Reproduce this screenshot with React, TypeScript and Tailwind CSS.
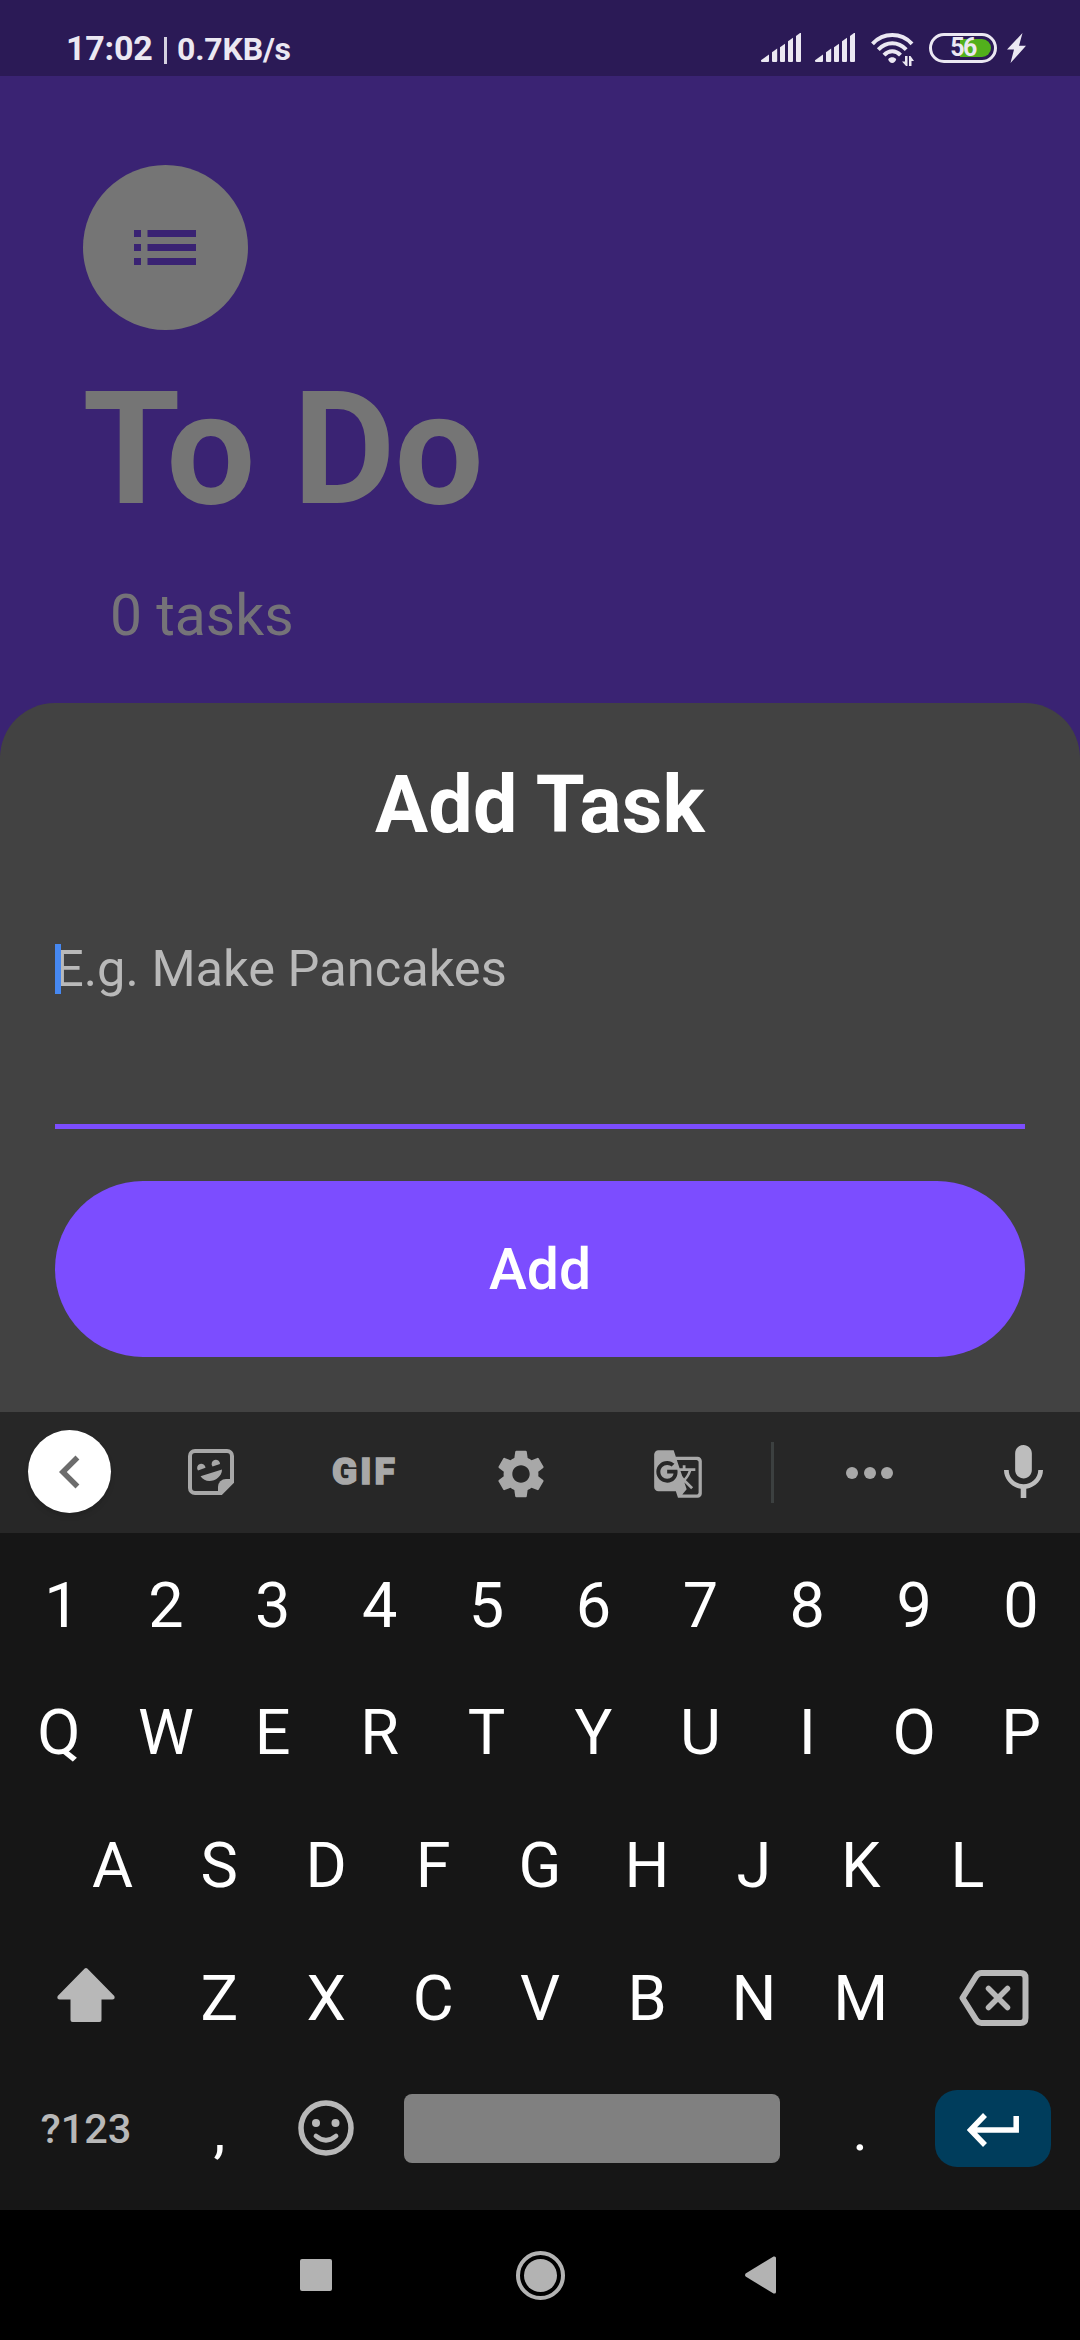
import type { ReactNode } from "react";
import { MdChevronLeft, MdGTranslate, MdSettings } from "react-icons/md";

function SignalBars() {
  return (
    <svg viewBox="0 0 40 29" className="h-[29px] w-[40px] fill-[#ebe8f2]">
      <path d="M0 28V27.2L8 21.6V28a1 1 0 0 1-1 1H1a1 1 0 0 1-1-1Z" />
      <path d="M11 19.3L16.2 15.6V28a1 1 0 0 1-1 1H12a1 1 0 0 1-1-1Z" />
      <path d="M19 14.3L24 10.8V28a1 1 0 0 1-1 1H20a1 1 0 0 1-1-1Z" />
      <path d="M27 8.3L32 4.8V28a1 1 0 0 1-1 1H28a1 1 0 0 1-1-1Z" />
      <path d="M35 3L39 0H40V28a1 1 0 0 1-1 1H36a1 1 0 0 1-1-1Z" />
    </svg>
  );
}

function WifiIcon() {
  return (
    <svg viewBox="0 0 43 33" className="h-[33px] w-[43px]">
      <g fill="none" stroke="#ebe8f2" strokeWidth="4">
        <path d="M1.5 10.8C12.5-.8 30-.8 41 10.8" />
        <path d="M7.3 16.6C15.5 8.200 27 8.200 35.2 16.6" />
        <path d="M13 22.2C17.8 16.9 24.7 16.9 29.5 22.2" />
      </g>
      <path d="M17.2 26.2C19.2 23.6 23.2 23.6 25.2 26.2C25 28 23 30 21.2 30C19.3 30 17.4 28 17.2 26.2Z" fill="#ebe8f2" />
      <path d="M34 23H36.5V33H35L31 28.5H34ZM38 23H39.5L43 28H40.5V33H38Z" fill="#ebe8f2" />
    </svg>
  );
}

function StatusBar() {
  return (
    <div className="flex h-[76px] items-start bg-[#2b1a56] pl-[66px] pr-[54px] text-[#ebe8f2]">
      <div className="flex items-baseline pt-[28px] font-bold leading-[40px]">
        <span className="text-[34px] tracking-[-0.2px]">17:02</span>
        <span className="ml-[11px] mr-[10px] h-[27px] w-[3.5px] translate-y-[2px] self-center bg-[#d5d1e0]" />
        <span className="text-[32px] tracking-[-0.2px]">0.7KB/s</span>
      </div>
      <div className="ml-auto flex items-start pt-[33px]">
        <SignalBars />
        <div className="w-[14px]" />
        <SignalBars />
        <div className="w-[16px]" />
        <WifiIcon />
        <div className="relative ml-[15px] flex h-[30px] w-[68px] items-center justify-center rounded-full border-[3px] border-[#ebe8f2]">
          <div className="absolute right-[3px] top-[3px] h-[18px] w-[31px] rounded-r-full bg-[#52b01c]" />
          <span className="relative text-[25px] font-bold leading-[24px] tracking-[-1.5px]">56</span>
        </div>
        <svg viewBox="0 0 19 30" className="ml-[10px] h-[30px] w-[19px] fill-[#ebe8f2]">
          <path d="M15.5 0L0 16.5H7L3.5 30L19 12.8H12Z" />
        </svg>
      </div>
    </div>
  );
}

function Header() {
  return (
    <div className="h-[627px] bg-[#3a2373] px-[82.5px] pt-[89px]">
      <div className="flex h-[165px] w-[165px] items-center justify-center rounded-full bg-[#757575]">
        <svg viewBox="0 0 62 35" className="h-[35px] w-[62px] fill-[#3a2373]">
          <path d="M0 0H7V7H0ZM13.5 0H62V7H13.5ZM0 14H7V21H0ZM13.5 14H62V21H13.5ZM0 28H7V35H0ZM13.5 28H62V35H13.5Z" />
        </svg>
      </div>
      <h1 className="mt-[38.5px] text-[158px] font-bold leading-[160px] tracking-[-0.9px] text-[#757575]">To Do</h1>
      <p className="ml-[27.5px] mt-[54px] text-[57px] leading-[66px] text-[#757378]">0 tasks</p>
    </div>
  );
}

function AddTaskSheet() {
  return (
    <div className="bg-[#3a2373]">
      <div className="flex h-[709px] flex-col rounded-t-[55px] bg-[#424242] px-[55px] pt-[56px]">
        <h2 className="text-center text-[79px] font-bold leading-[92px] tracking-[0.3px] text-white">Add Task</h2>
        <div className="relative mt-[93px] h-[185px] border-b-[5px] border-[#7c4dff]">
          <span className="block whitespace-nowrap text-[50.6px] leading-[50px] text-[#b9b9b9]">E.g. Make Pancakes</span>
          <div className="absolute left-0 top-0 h-[50px] w-[6px] bg-[#4688f1]" />
        </div>
        <button className="mt-[52px] h-[176px] rounded-full bg-[#7c4dff] pt-[2px] text-[57px] font-medium text-white">Add</button>
      </div>
    </div>
  );
}

function StickerIcon() {
  return (
    <svg viewBox="0 0 46 46" className="h-[46px] w-[46px]">
      <path d="M7 2H39A5 5 0 0 1 44 7V33L33 44H7A5 5 0 0 1 2 39V7A5 5 0 0 1 7 2Z" fill="none" stroke="#a8a8a8" strokeWidth="4" />
      <path d="M30 46V38A8 8 0 0 1 38 30H46V32.5L32.5 46Z" fill="#a8a8a8" />
      <path d="M10 21.5A4.2 4.2 0 1 1 17.5 18.8ZM24.5 17.5A4.2 4.2 0 1 1 32 15ZM12.5 27.3L34 20.5C34 31 18.5 36.5 12.5 27.3Z" fill="#a8a8a8" />
    </svg>
  );
}

function Toolbar() {
  return (
    <div className="flex h-[121px] items-start bg-[#272727] text-[#a8a8a8]">
      <div className="ml-[28px] mt-[18px] flex h-[83px] w-[83px] items-center justify-center rounded-full bg-white text-[#6c6c6c] shadow-md">
        <MdChevronLeft className="h-[66px] w-[66px]" />
      </div>
      <div className="ml-[77px] mt-[37px]">
        <StickerIcon />
      </div>
      <span className="ml-[98px] mt-[38px] w-[68px] text-[37px] font-black leading-[44px] tracking-[3px] [-webkit-text-stroke:1.5px_#a8a8a8]">GIF</span>
      <MdSettings className="ml-[92px] mt-[33px] h-[58px] w-[58px]" />
      <MdGTranslate className="ml-[102px] mt-[36px] h-[52px] w-[52px]" />
      <div className="ml-[67px] mt-[30px] h-[61px] w-[3px] bg-[#3c4040]" />
      <div className="ml-[72px] mt-[55px] flex gap-[5.5px]">
        <div className="h-[12px] w-[12px] rounded-full bg-[#a8a8a8]" />
        <div className="h-[12px] w-[12px] rounded-full bg-[#a8a8a8]" />
        <div className="h-[12px] w-[12px] rounded-full bg-[#a8a8a8]" />
      </div>
      <svg viewBox="5 2 14 19" className="ml-[111px] mt-[33px] h-[53px] w-[39px] fill-[#bdbdbd]">
        <path d="M12 14c1.660 0 2.990-1.340 2.990-3L15 5c0-1.660-1.340-3-3-3S9 3.340 9 5v6c0 1.660 1.340 3 3 3zm5.300-3c0 3-2.540 5.100-5.300 5.100S6.700 14 6.700 11H5c0 3.410 2.720 6.230 6 6.720V21h2v-3.280c3.280-.48 6-3.300 6-6.720h-1.700z" />
      </svg>
    </div>
  );
}

function Key({ children }: { children: ReactNode }) {
  return <div className="w-[106.9px] text-center">{children}</div>;
}

function Keyboard() {
  return (
    <div className="h-[677px] bg-[#161616] pt-[12.5px] text-[63px] text-white">
      <div className="flex h-[120px] justify-center leading-[120px]">
        <div className="w-[106.9px] pl-[6px] text-center">1</div>
        {"234567890".split("").map((k) => <Key key={k}>{k}</Key>)}
      </div>
      <div className="flex h-[133px] justify-center leading-[133px]">
        {"QWERTYUIOP".split("").map((k) => <Key key={k}>{k}</Key>)}
      </div>
      <div className="flex h-[133px] justify-center leading-[133px]">
        {"ASDFGHJKL".split("").map((k) => <Key key={k}>{k}</Key>)}
      </div>
      <div className="flex h-[133px] items-center leading-[133px]">
        <div className="flex w-[166px] justify-center pl-[6px]">
          <svg viewBox="0 0 58 54" className="h-[54px] w-[58px] -translate-y-[3px] fill-[#b8b8b8]">
            <path d="M27.7.6Q29-.6 30.3.6L57.3 28Q58.5 31.5 55.5 31.5H44.5V52Q44.5 54 42.5 54H15.5Q13.5 54 13.5 52V31.5H2.5Q-.5 31.5.7 28Z" />
          </svg>
        </div>
        {"ZXCVBNM".split("").map((k) => <Key key={k}>{k}</Key>)}
        <div className="flex w-[160px] justify-center">
          <svg viewBox="0 0 70 56" className="h-[56px] w-[70px]" fill="none" stroke="#b8b8b8">
            <path d="M3.5 28L17 6.5Q19.2 3 22.5 3H61.5Q66.5 3 66.5 8V48Q66.5 53 61.5 53H22.5Q19.2 53 17 49.5Z" strokeWidth="6" strokeLinejoin="round" />
            <path d="M29.5 18.5L48.5 37.5M48.5 18.5L29.5 37.5" strokeWidth="5.5" strokeLinecap="round" />
          </svg>
        </div>
      </div>
      <div className="flex h-[127px] items-center">
        <div className="w-[166px] pl-[6px] pt-[2px] text-center text-[41.5px] font-medium text-[#b8b8b8]">?123</div>
        <div className="pt-[5px] text-[60px]">
          <Key>,</Key>
        </div>
        <div className="flex w-[106.9px] justify-center">
          <svg viewBox="0 0 56 56" className="h-[56px] w-[56px]">
            <circle cx="28" cy="28" r="25" fill="none" stroke="#b8b8b8" strokeWidth="5.5" />
            <circle cx="18" cy="23" r="4" fill="#b8b8b8" />
            <circle cx="37.5" cy="23" r="4" fill="#b8b8b8" />
            <path d="M18 36Q28 44.5 38 36" fill="none" stroke="#b8b8b8" strokeWidth="4.8" strokeLinecap="round" />
          </svg>
        </div>
        <div className="ml-[24px] h-[69px] w-[376px] rounded-[8px] bg-[#808080]" />
        <div className="ml-[27px] pt-[5px] text-[58px]">
          <Key>.</Key>
        </div>
        <div className="ml-[21px] flex h-[77px] w-[116px] items-center justify-center rounded-[22px] bg-[#003d5c]">
          <svg viewBox="0 0 52 34" className="h-[34px] w-[52px] translate-y-[2px]" fill="none" stroke="white" strokeWidth="5.5">
            <path d="M18 2L3.5 17L18 32M4 17H49.2V3" />
          </svg>
        </div>
      </div>
    </div>
  );
}

function NavBar() {
  return (
    <div className="flex h-[130px] items-center bg-black">
      <div className="ml-[300px] h-[32px] w-[32px] rounded-[2px] bg-[#b3b3b3]" />
      <div className="ml-[184px] flex h-[49px] w-[49px] items-center justify-center rounded-full border-4 border-[#b3b3b3]">
        <div className="h-[33px] w-[33px] rounded-full bg-[#b3b3b3]" />
      </div>
      <svg viewBox="0 0 31 38" className="ml-[180px] h-[38px] w-[31px] fill-[#b3b3b3]">
        <path d="M1 17.2L28.5.6Q31 0 31 2V36Q31 38 28.5 37.4L1 20.8Q-1 19 1 17.2Z" />
      </svg>
    </div>
  );
}

export default function App() {
  return (
    <div className="h-[2340px] w-[1080px] overflow-hidden font-['Roboto',sans-serif]">
      <StatusBar />
      <Header />
      <AddTaskSheet />
      <Toolbar />
      <Keyboard />
      <NavBar />
    </div>
  );
}
